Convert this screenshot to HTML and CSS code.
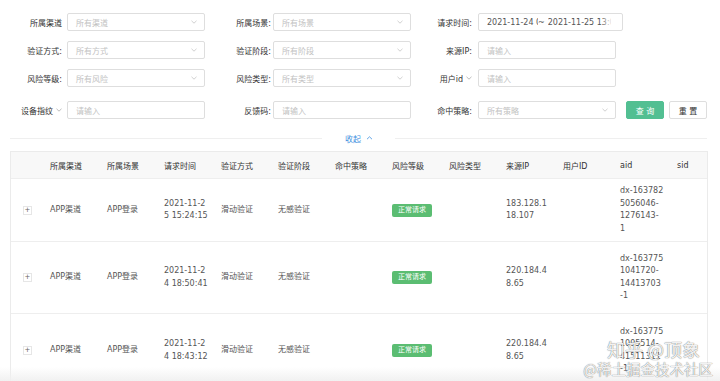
FILE: index.html
```html
<!DOCTYPE html>
<html>
  <head>
    <meta charset="utf-8" />
    <title>风险请求查询</title>
    <meta name="viewport" content="width=device-width, initial-scale=1.0" />
    <link rel="stylesheet" href="styles.css">
  </head>
  <body>
    <form class="filters">
      <label class="field-label">所属渠道</label>
      <div class="control"><span>所有渠道</span><svg class="caret" viewBox="0 0 6 4"><path d="M0.5 0.8 3 3.2 5.5 0.8" /></svg></div>
      <label class="field-label">所属场景:</label>
      <div class="control"><span>所有场景</span><svg class="caret" viewBox="0 0 6 4"><path d="M0.5 0.8 3 3.2 5.5 0.8" /></svg></div>
      <label class="field-label">请求时间:</label>
      <div class="control control-date">
        <span class="date-start">2021-11-24 00:00:00</span>
        <span class="date-sep">~</span>
        <span class="date-end">2021-11-25 13:00:00</span>
      </div>

      <label class="field-label">验证方式:</label>
      <div class="control"><span>所有方式</span><svg class="caret" viewBox="0 0 6 4"><path d="M0.5 0.8 3 3.2 5.5 0.8" /></svg></div>
      <label class="field-label">验证阶段:</label>
      <div class="control"><span>所有阶段</span><svg class="caret" viewBox="0 0 6 4"><path d="M0.5 0.8 3 3.2 5.5 0.8" /></svg></div>
      <label class="field-label">来源IP:</label>
      <div class="control"><span>请输入</span></div>

      <label class="field-label">风险等级:</label>
      <div class="control"><span>所有风险</span><svg class="caret" viewBox="0 0 6 4"><path d="M0.5 0.8 3 3.2 5.5 0.8" /></svg></div>
      <label class="field-label">风险类型:</label>
      <div class="control"><span>所有类型</span><svg class="caret" viewBox="0 0 6 4"><path d="M0.5 0.8 3 3.2 5.5 0.8" /></svg></div>
      <label class="field-label">用户id<svg class="label-caret" viewBox="0 0 6 4"><path d="M0.5 0.8 3 3.2 5.5 0.8" /></svg></label>
      <div class="control"><span>请输入</span></div>

      <label class="field-label">设备指纹<svg class="label-caret" viewBox="0 0 6 4"><path d="M0.5 0.8 3 3.2 5.5 0.8" /></svg></label>
      <div class="control"><span>请输入</span></div>
      <label class="field-label">反馈码:</label>
      <div class="control"><span>请输入</span></div>
      <label class="field-label">命中策略:</label>
      <div class="actions">
        <div class="control"><span>所有策略</span><svg class="caret" viewBox="0 0 6 4"><path d="M0.5 0.8 3 3.2 5.5 0.8" /></svg></div>
        <button type="button" class="btn btn-primary">查 询</button>
        <button type="button" class="btn">重 置</button>
      </div>
    </form>

    <div class="collapse">
      <span class="collapse-line"></span>
      <a class="collapse-link">收起<svg viewBox="0 0 6 4"><path d="M0.5 3.2 3 0.8 5.5 3.2" /></svg></a>
      <span class="collapse-line"></span>
    </div>

    <div class="table-wrap">
      <table class="records">
        <colgroup>
          <col class="col-expand" />
          <col span="12" class="col-data" />
        </colgroup>
        <thead>
          <tr>
            <th></th>
            <th>所属渠道</th>
            <th>所属场景</th>
            <th>请求时间</th>
            <th>验证方式</th>
            <th>验证阶段</th>
            <th>命中策略</th>
            <th>风险等级</th>
            <th>风险类型</th>
            <th>来源IP</th>
            <th>用户ID</th>
            <th>aid</th>
            <th>sid</th>
          </tr>
        </thead>
        <tbody>
          <tr>
            <td><span class="expand">+</span></td>
            <td>APP渠道</td>
            <td>APP登录</td>
            <td>2021-11-2<br>5 15:24:15</td>
            <td>滑动验证</td>
            <td>无感验证</td>
            <td></td>
            <td><span class="tag">正常请求</span></td>
            <td></td>
            <td>183.128.1<br>18.107</td>
            <td></td>
            <td>dx-163782<br>5056046-<br>1276143-<br>1</td>
            <td></td>
          </tr>
          <tr>
            <td><span class="expand">+</span></td>
            <td>APP渠道</td>
            <td>APP登录</td>
            <td>2021-11-2<br>4 18:50:41</td>
            <td>滑动验证</td>
            <td>无感验证</td>
            <td></td>
            <td><span class="tag">正常请求</span></td>
            <td></td>
            <td>220.184.4<br>8.65</td>
            <td></td>
            <td>dx-163775<br>1041720-<br>14413703<br>-1</td>
            <td></td>
          </tr>
          <tr>
            <td><span class="expand">+</span></td>
            <td>APP渠道</td>
            <td>APP登录</td>
            <td>2021-11-2<br>4 18:43:12</td>
            <td>滑动验证</td>
            <td>无感验证</td>
            <td></td>
            <td><span class="tag">正常请求</span></td>
            <td></td>
            <td>220.184.4<br>8.65</td>
            <td></td>
            <td>dx-163775<br>1095514-<br>41511311<br>-1</td>
            <td></td>
          </tr>
        </tbody>
      </table>
    </div>

    <div class="scroll-shadow"></div>

    <div class="watermark">
      <div class="watermark-main">知乎 @顶象</div>
      <div class="watermark-sub">@稀土掘金技术社区</div>
    </div>
  </body>
</html>
```

FILE: styles.css
```css
body {
  position: relative;
  box-sizing: border-box;
  height: 381px;
  margin: 0;
  padding: 13px 13px 0 10px;
  overflow: hidden;
  background: #fff;
  color: #333;
  font-family: "DejaVu Sans", "Noto Sans CJK SC", sans-serif;
  font-size: 8px;
}

/**
 * Filter form
 */
.filters {
  display: grid;
  grid-template-columns: 57px 138px 68px 138px 67px 145px;
  grid-template-rows: 18px 18px 18px 22px;
  row-gap: 10px;
  align-items: end;
}

.field-label {
  display: flex;
  align-items: center;
  justify-content: flex-end;
  height: 18px;
  white-space: nowrap;
}

.field-label:nth-of-type(3n + 1) {
  padding-right: 5px;
}

.field-label:nth-of-type(3n + 2) {
  padding-right: 2px;
}

.field-label:nth-of-type(3n) {
  padding-right: 6px;
}

.label-caret {
  width: 6px;
  height: 4px;
  margin-left: 3px;
  fill: none;
  stroke: #aaa;
  stroke-width: 0.8;
}

.control {
  display: flex;
  flex-shrink: 0;
  align-items: center;
  justify-content: space-between;
  box-sizing: border-box;
  width: 138px;
  height: 18px;
  padding: 0 7px 0 8px;
  border: 1px solid #dedede;
  border-radius: 2px;
  background: #fff;
  color: #c2c2c2;
  white-space: nowrap;
}

.caret {
  width: 6px;
  height: 4px;
  fill: none;
  stroke: #c4c4c4;
  stroke-width: 0.8;
}

.control-date {
  justify-content: flex-start;
  width: 145px;
  padding-right: 4px;
  color: #555;
}

.date-start {
  flex-shrink: 0;
  width: 51px;
  overflow: hidden;
}

.date-sep {
  flex-shrink: 0;
  margin: 0 3px 0 0;
}

.date-end {
  position: relative;
  flex-shrink: 0;
  width: 63px;
  overflow: hidden;
}

.date-end::after {
  content: "";
  position: absolute;
  top: 0;
  right: 0;
  bottom: 0;
  width: 8px;
  background: linear-gradient(to right, rgba(255, 255, 255, 0.2), rgba(255, 255, 255, 0.85));
}

.actions {
  display: flex;
  align-items: center;
}

.btn {
  flex-shrink: 0;
  box-sizing: border-box;
  width: 38px;
  height: 18px;
  margin-left: 5px;
  padding: 0;
  border: 1px solid #dedede;
  border-radius: 2px;
  background: #fff;
  color: #333;
  font-family: inherit;
  font-size: 8px;
}

.btn-primary {
  margin-left: 10px;
  border-color: #52bf92;
  background: #52bf92;
  color: #fff;
}

/**
 * Collapse toggle
 */
.collapse {
  display: flex;
  align-items: center;
  height: 12px;
  margin-top: 13px;
}

.collapse-line {
  flex: 1;
  height: 1px;
  background: #efefef;
}

.collapse-link {
  display: flex;
  align-items: center;
  margin: 0 22px 0 23px;
  color: #3d8fe0;
}

.collapse-link svg {
  width: 7px;
  height: 4px;
  margin-left: 5px;
  fill: none;
  stroke: #3d8fe0;
  stroke-width: 0.8;
}

/**
 * Records table
 */
.table-wrap {
  width: 696px;
  margin-top: 7px;
  overflow: hidden;
  border: 1px solid #ebebeb;
  border-bottom: 0;
}

.records {
  table-layout: fixed;
  width: 718px;
  border-spacing: 0;
}

.col-expand {
  width: 34px;
}

.col-data {
  width: 57px;
}

.records th,
.records td {
  padding: 0 4px 0 5px;
  border-bottom: 1px solid #eeeeee;
  text-align: left;
  vertical-align: middle;
  white-space: nowrap;
}

.records th {
  height: 26px;
  background: #f8f8f8;
  color: #333;
  font-weight: normal;
}

.records td {
  color: #555;
  line-height: 12.5px;
}

.records td:first-child {
  padding-left: 12px;
}

.records tbody tr:nth-child(1) td {
  height: 62px;
}

.records tbody tr:nth-child(2) td {
  height: 71px;
}

.records tbody tr:nth-child(3) td {
  height: 73px;
}

.expand {
  display: inline-block;
  width: 7px;
  height: 7px;
  border: 1px solid #e6e6e6;
  color: #666;
  font-size: 7px;
  line-height: 7px;
  text-align: center;
}

.tag {
  display: inline-block;
  height: 13px;
  padding: 0 6px;
  border-radius: 2px;
  background: #5bbd72;
  color: #fff;
  font-size: 7px;
  line-height: 13px;
}

.scroll-shadow {
  position: absolute;
  left: 0;
  right: 0;
  bottom: 0;
  height: 14px;
  background: linear-gradient(rgba(245, 245, 245, 0), rgba(240, 240, 240, 0.95));
}

.watermark {
  position: absolute;
  right: 7px;
  bottom: 4px;
  color: rgba(255, 255, 255, 0.92);
  font-family: "Noto Sans CJK SC", sans-serif;
  text-align: right;
  text-shadow: 0 0 1px rgba(0, 0, 0, 0.4), 0 0 1px rgba(0, 0, 0, 0.4);
}

.watermark-main {
  margin-right: 13px;
  font-size: 18px;
  line-height: 22px;
}

.watermark-sub {
  font-size: 14.5px;
  line-height: 17px;
}
```
